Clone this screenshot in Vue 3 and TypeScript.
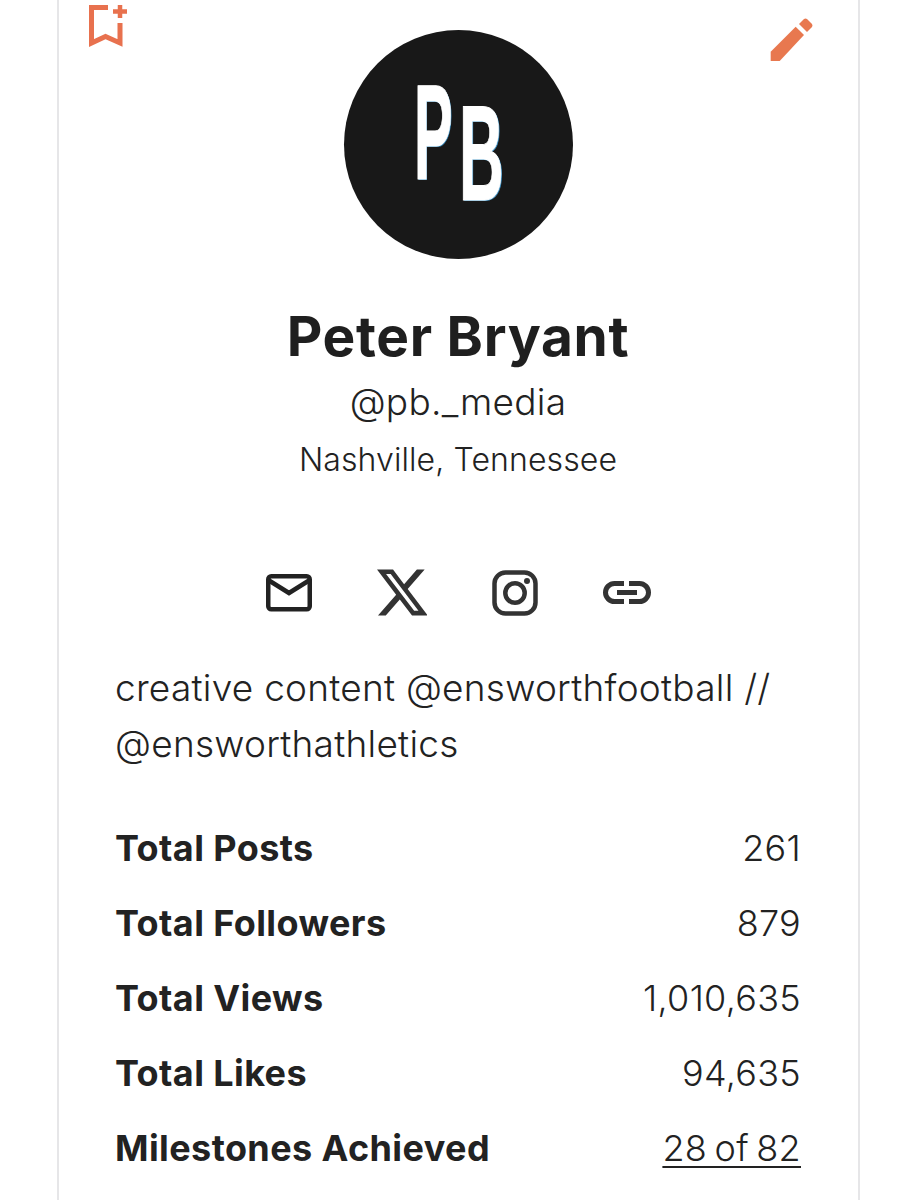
<script setup lang="ts">
const stats = [
  { label: 'Total Posts', value: '261' },
  { label: 'Total Followers', value: '879' },
  { label: 'Total Views', value: '1,010,635' },
  { label: 'Total Likes', value: '94,635' },
  { label: 'Milestones Achieved', value: '28 of 82', link: true },
]
</script>

<template>
  <div class="page">
    <section class="card">
      <div class="top">
        <svg class="bookmark" width="40" height="48" viewBox="0 0 40 48" fill="none">
          <path d="M19 7.500H2.500V43L16.500 36.500L31 43V23" stroke="#e8714e" stroke-width="5" />
          <path d="M24 11.500H38M31 5V18" stroke="#e8714e" stroke-width="4.500" />
        </svg>
        <div class="avatar">
          <span class="letter p">P</span>
          <span class="letter b">B</span>
        </div>
        <svg class="pencil" width="46" height="46" viewBox="0 0 46 46">
          <path d="M1.700 34.700L26.700 9.700L35 18L10.700 44H1.700Z" fill="#e8784f" />
          <path d="M30 7L35 2Q36.500 1 38 2L43 7Q44 8.500 43 10L38 15Z" fill="#e8784f" />
        </svg>
      </div>
      <h1 class="name">Peter Bryant</h1>
      <p class="handle">@pb._media</p>
      <p class="place">Nashville, Tennessee</p>
      <div class="socials">
        <svg width="46" height="38" viewBox="0 0 46 38" fill="none" stroke="#222" stroke-width="4.500">
          <rect x="2.250" y="2.250" width="41.500" height="33" rx="3" />
          <path d="M3 6.500L23 19L43 6.500" />
        </svg>
        <svg width="50" height="47" viewBox="1.250 2.250 21.300 19.500" fill="#333">
          <path d="M18.244 2.250h3.308l-7.227 8.260 8.502 11.240H16.170l-5.214-6.817L4.990 21.750H1.680l7.730-8.835L1.254 2.250H8.080l4.713 6.231zm-1.161 17.520h1.833L7.084 4.126H5.117z" />
        </svg>
        <svg width="46" height="46" viewBox="0 0 46 46" fill="none" stroke="#333" stroke-width="4.500">
          <rect x="2.500" y="2.500" width="41" height="41" rx="11" />
          <circle cx="23" cy="23" r="9.700" />
          <circle cx="35" cy="11" r="3" fill="#333" stroke="none" />
        </svg>
        <svg width="48" height="23" viewBox="0 0 48 23" fill="none" stroke="#333" stroke-width="5">
          <path d="M21 2.500H11.500A9 9 0 0 0 11.500 20.500H21M26 2.500H36.500A9 9 0 0 1 36.500 20.500H26" />
          <path d="M14 11.500H34" />
        </svg>
      </div>
      <p class="bio">creative content @ensworthfootball // @ensworthathletics</p>
      <dl class="stats">
        <div v-for="s in stats" :key="s.label" class="row">
          <dt>{{ s.label }}</dt>
          <dd :class="{ link: s.link }">{{ s.value }}</dd>
        </div>
      </dl>
    </section>
  </div>
</template>

<style scoped>
.page {
  height: 1200px;
  overflow: hidden;
  padding: 0 57px;
  box-sizing: border-box;
  background: #fff;
  font-family: Inter, "Open Sans", sans-serif;
  color: #222;
}
.card {
  height: 1200px;
  box-sizing: border-box;
  border: solid #e6e6e8;
  border-width: 0 2px;
  padding: 0 57px 0 56px;
}
.top {
  height: 259px;
  margin: 0 -57px 0 -56px;
  padding: 0 43px 0 30px;
  display: flex;
  justify-content: space-between;
  align-items: flex-start;
  position: relative;
}
.pencil {
  margin-top: 17px;
}
.avatar {
  position: absolute;
  left: 50%;
  top: 30px;
  margin-left: -114.500px;
  width: 229px;
  height: 229px;
  border-radius: 50%;
  background: #181818;
  overflow: hidden;
}
.letter {
  position: absolute;
  font-family: "Liberation Sans", sans-serif;
  font-weight: 700;
  font-size: 135px;
  line-height: 97px;
  height: 97px;
  color: #fff;
  text-shadow: 2px 1px 0 #3f8fc0;
  -webkit-text-stroke: 1px #fff;
  transform-origin: left top;
  transform: scaleX(0.43);
}
.p {
  left: 70px;
  top: 54px;
}
.b {
  left: 115px;
  top: 75px;
  transform: scaleX(0.46);
}
.name {
  margin: 49px 0 0;
  font-size: 55px;
  line-height: 56px;
  font-weight: 700;
  text-align: center;
  letter-spacing: 0.7px;
  color: #1f1f1f;
}
.handle {
  margin: 16px 0 0;
  text-align: center;
  font-size: 37px;
  line-height: 44px;
  font-weight: 300;
  letter-spacing: 0.3px;
}
.place {
  margin: 16px 0 0;
  text-align: center;
  font-size: 32px;
  line-height: 40px;
  font-weight: 300;
  letter-spacing: 0.1px;
}
.socials {
  margin: 89px 0 0;
  display: flex;
  justify-content: center;
  align-items: center;
  gap: 65px;
}
.bio {
  margin: 44px 0 0;
  font-size: 37px;
  line-height: 56px;
  font-weight: 300;
  letter-spacing: 0.25px;
}
.stats {
  margin: 38px 0 0;
}
.row {
  display: flex;
  justify-content: space-between;
  height: 75px;
  align-items: center;
  font-size: 36px;
}
dt {
  font-weight: 700;
  letter-spacing: 0.4px;
}
dd {
  margin: 0;
  font-weight: 300;
  letter-spacing: 0.3px;
}
.link {
  text-decoration: underline;
  text-underline-offset: 5px;
  text-decoration-thickness: 2px;
  word-spacing: -3px;
}
</style>
